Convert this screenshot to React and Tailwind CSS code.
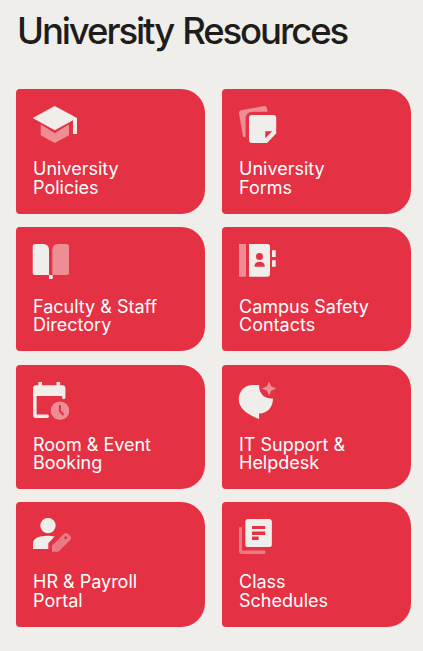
function PoliciesIcon() {
  return (
    <>
      <path d="M.7 13 22.7 1 45 13v16h-4V15.2L22.7 25.3Z" />
      <path d="M8.7 19.3 22.7 28.3 37 19.3v11L22.7 38 8.7 30.3Z" className="fill-[#ee8d94]" />
    </>
  )
}

function FormsIcon() {
  return (
    <>
      <path d="M1 8.2Q.7 5.7 3.2 5.2L26 1.1Q28.4.8 29 3.2L29.6 6.8H15Q8 6.8 7.6 13.5V32Q5.4 33 4.8 30.5Z" className="fill-[#ee8d94]" />
      <path fillRule="evenodd" d="M14 10H35.2Q38.2 10 38.2 13V28.6L29 38H14Q11 38 11 35V13Q11 10 14 10ZM27.3 26.3V33.2L34.2 26.3Z" />
    </>
  )
}

function DirectoryIcon() {
  return (
    <>
      <path d="M3.2.9H11Q17 .9 17 7V32.1H2.7Q.7 32.1 .7 30.1V3.4Q.7.9 3.2.9ZM17 32.1h3.7V36H17Z" />
      <path d="M26.3.9H34.5Q37 .9 37 3.4V30.1Q37 32.1 35 32.1H20.3V7Q20.3.9 26.3.9Z" className="fill-[#ee8d94]" />
    </>
  )
}

function SafetyIcon() {
  return (
    <>
      <path d="M1 1h7v32.7H1Z" className="fill-[#ee8d94]" />
      <path d="M11 1h18.3Q32 1 32 3.7V31Q32 33.7 29.3 33.7H11ZM34 7.3h3.7V14H34ZM34 17.2h3.7v6.6H34Z" />
      <g className="fill-[#e53144]">
        <circle cx="21.5" cy="13.5" r="3.5" />
        <path d="M16.6 23.8V22.4Q17.2 18.8 21.6 18.8T26.7 22.4V23.8Z" />
      </g>
    </>
  )
}

function BookingIcon() {
  return (
    <>
      <path d="M6.4 1h3.6v3.3H24.5V1h3.6v3.3h2.4Q33.4 4.3 33.4 7.2V16.5A1.6 1.6 0 0 1 30.1 16.5V15H4.6V33.6H15.3A1.7 1.7 0 0 1 15.3 37H4.2Q1.1 37 1.1 33.9V7.4Q1.1 4.3 4.2 4.3H6.4Z" />
      <circle cx="28" cy="29.7" r="9.3" className="fill-[#ee8d94]" />
      <path d="M27.9 24V30.2L31.6 34" className="fill-none stroke-[#e53144] stroke-2" />
    </>
  )
}

function SupportIcon() {
  return (
    <>
      <path d="M14.8 4.1H21.2C20.4 11.5 26 18.3 35 17.4C35 26 29.5 32.3 21.1 32.4V38C8.5 33.5.8 27 .8 18.3C.8 10 7 4.1 14.8 4.1Z" />
      <path d="M31.1.4 33.3 5.3 38.3 7.5 33.3 9.8 31.1 14.7 28.9 9.8 23.9 7.5 28.9 5.3Z" className="fill-[#ee8d94]" />
    </>
  )
}

function PayrollIcon() {
  return (
    <>
      <circle cx="16" cy="7.6" r="7.7" />
      <path d="M1 31.1V26Q1 17.8 15.8 17.8Q19.3 17.8 22.6 18.6L16.3 25.2V31.1Z" />
      <path fillRule="evenodd" d="M20 33.8V27.7L31.8 16Q34 14 36.2 16L38 17.8Q40.2 20 38 22.2L26.3 33.8ZM33.7 18.2a1.5 1.5 0 1 0 .1 0Z" className="fill-[#ea7b85]" />
    </>
  )
}

function SchedulesIcon() {
  return (
    <>
      <path d="M1 9.2H4V32.6H27.2V36H4Q1 36 1 33Z" className="fill-[#ea7b85]" />
      <path fillRule="evenodd" d="M10.2.9H31Q33.9.9 33.9 3.8V26.2Q33.9 29.1 31 29.1H10.2Q7.3 29.1 7.3 26.2V3.8Q7.3.9 10.2.9ZM14 8.1V11H27.2V8.1ZM14 13.4V17H27.2V13.4ZM14 18.6V21.9H20.7V18.6Z" />
    </>
  )
}

const resources = [
  { lines: ['University', 'Policies'], Icon: PoliciesIcon },
  { lines: ['University', 'Forms'], Icon: FormsIcon },
  { lines: ['Faculty & Staff', 'Directory'], Icon: DirectoryIcon },
  { lines: ['Campus Safety', 'Contacts'], Icon: SafetyIcon },
  { lines: ['Room & Event', 'Booking'], Icon: BookingIcon },
  { lines: ['IT Support &', 'Helpdesk'], Icon: SupportIcon },
  { lines: ['HR & Payroll', 'Portal'], Icon: PayrollIcon },
  { lines: ['Class', 'Schedules'], Icon: SchedulesIcon },
]

export default function App() {
  return (
    <main className="h-[651px] w-[423px] overflow-hidden bg-[#efeeea] pl-4 pr-3 pt-2 font-['Inter','Liberation_Sans',sans-serif]">
      <h1 className="ml-px h-[81px] whitespace-nowrap text-[36.5px] font-medium leading-[47px] tracking-[-2.1px] [word-spacing:1.5px] text-[#1f1c1c]">
        University Resources
      </h1>
      <div className="grid grid-cols-2 gap-x-[17px] gap-y-[13.25px]">
        {resources.map(({ lines, Icon }) => (
          <a
            key={lines.join(' ')}
            className="flex h-[124.5px] flex-col rounded-l-[4px] rounded-r-[24px] bg-[#e53144] pl-4 pt-4 text-white"
          >
            <svg viewBox="0 0 48 40" className="h-10 w-12 fill-[#efeeea]" aria-hidden="true">
              <Icon />
            </svg>
            <span className="ml-px mt-[15px] text-[18px] leading-[18.7px]">
              {lines[0]}
              <br />
              {lines[1]}
            </span>
          </a>
        ))}
      </div>
    </main>
  )
}
